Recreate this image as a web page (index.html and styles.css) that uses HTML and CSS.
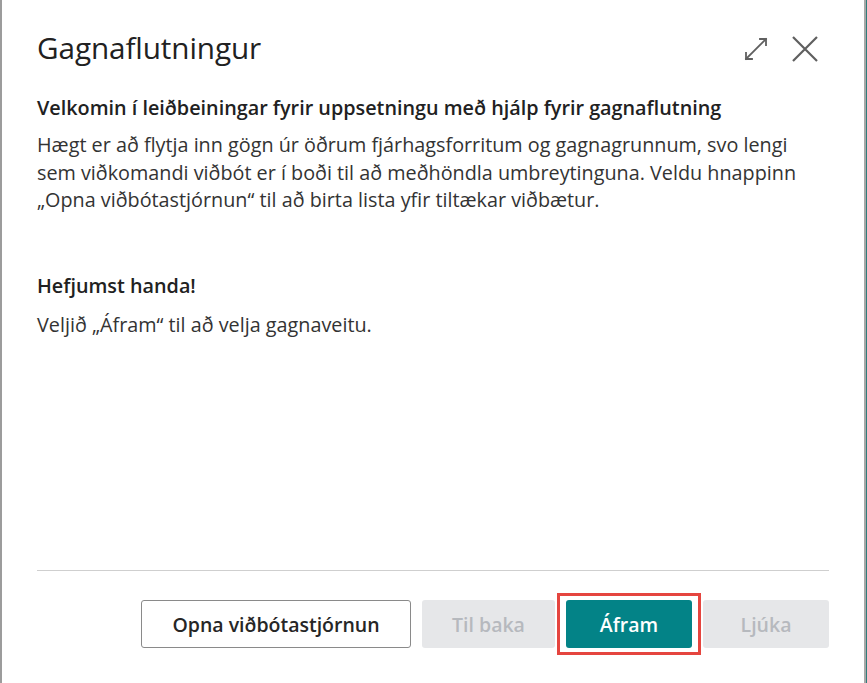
FILE: index.html
```html
<!DOCTYPE html>
<html lang="is">
<head>
<meta charset="utf-8">
<link rel="stylesheet" href="styles.css">
</head>
<body>
<div class="page">
  <div class="dialog">
    <header class="head">
      <h1 class="title">Gagnaflutningur</h1>
      <div class="tools">
        <button class="icon-btn" aria-label="Stækka">
          <svg width="24" height="24" viewBox="0 0 24 24" fill="none" stroke="#5f5f5f" stroke-width="1.8" stroke-linecap="square">
            <path d="M2 22 L22 2"/>
            <path d="M2 22 L2 16 M2 22 L8 22"/>
            <path d="M22 2 L16 2 M22 2 L22 8"/>
          </svg>
        </button>
        <button class="icon-btn" aria-label="Loka">
          <svg width="26" height="26" viewBox="0 0 26 26" fill="none" stroke="#5f5f5f" stroke-width="2.2">
            <path d="M1 1 L25 25 M25 1 L1 25"/>
          </svg>
        </button>
      </div>
    </header>
    <main class="content">
      <h2 class="lead">Velkomin í leiðbeiningar fyrir uppsetningu með hjálp fyrir gagnaflutning</h2>
      <p class="text">Hægt er að flytja inn gögn úr öðrum fjárhagsforritum og gagnagrunnum, svo lengi sem viðkomandi viðbót er í boði til að meðhöndla umbreytinguna. Veldu hnappinn „Opna viðbótastjórnun“ til að birta lista yfir tiltækar viðbætur.</p>
      <h2 class="lead second">Hefjumst handa!</h2>
      <p class="text tight">Veljið „Áfram“ til að velja gagnaveitu.</p>
    </main>
    <footer class="foot">
      <div class="actions">
        <button class="btn btn-outline">Opna viðbótastjórnun</button>
        <button class="btn btn-disabled">Til baka</button>
        <span class="highlight"><button class="btn btn-primary">Áfram</button></span>
        <button class="btn btn-disabled btn-finish">Ljúka</button>
      </div>
    </footer>
  </div>
  <div class="edge"></div>
</div>
</body>
</html>
```

FILE: styles.css
```css
* { box-sizing: border-box; }
html, body {
  margin: 0;
  padding: 0;
  height: 100%;
  background: #ffffff;
}
body {
  font-family: "Open Sans", "Noto Sans", sans-serif;
  color: #212121;
}
.page {
  display: flex;
  height: 683px;
  width: 867px;
}
.dialog {
  flex: 1;
  display: flex;
  flex-direction: column;
  border-left: 2px solid #9c9c9c;
  border-right: 2px solid #a8a8a8;
  background: #fff;
}
.edge {
  width: 1px;
  background: #2e7d7b;
}
.head {
  display: flex;
  align-items: flex-start;
  justify-content: space-between;
  padding: 30px 46px 0 35px;
}
.title {
  margin: 0;
  font-size: 29.7px;
  font-weight: 400;
  line-height: 36px;
  color: #212121;
  letter-spacing: -0.1px;
}
.tools {
  display: flex;
  align-items: center;
  gap: 24px;
  padding-top: 6px;
}
.icon-btn {
  border: 0;
  background: none;
  padding: 0;
  display: flex;
}
.content {
  flex: 1;
  padding: 28px 36px 0 35px;
}
.lead {
  margin: 0;
  font-size: 19.8px;
  font-weight: 600;
  line-height: 27px;
  color: #212121;
}
.lead.second {
  margin-top: 58px;
}
.text {
  margin: 10px 0 0;
  font-size: 19.8px;
  line-height: 27.5px;
  color: #333;
}
.text.tight {
  margin-top: 12px;
}
.foot {
  padding: 0 35px 35px 35px;
}
.actions {
  border-top: 1px solid #cfcfcf;
  padding-top: 29px;
  display: flex;
  justify-content: flex-end;
  align-items: center;
  gap: 11px;
}
.btn {
  height: 48px;
  border-radius: 3px;
  font-family: inherit;
  font-size: 19.5px;
  font-weight: 600;
  padding: 0 10px;
  border: 1px solid transparent;
}
.btn-outline {
  width: 270px;
  background: #fff;
  border-color: #8a8a8a;
  color: #262626;
}
.btn-disabled {
  width: 133px;
  background: #e6e7e9;
  color: #b6b9be;
}
.highlight {
  display: flex;
  border: 3px solid #e5453f;
  padding: 4px 6px;
  margin: -7px -9px;
}
.btn-primary {
  width: 126px;
  background: #038387;
  color: #fff;
}
.btn-finish {
  width: 126px;
}
```
